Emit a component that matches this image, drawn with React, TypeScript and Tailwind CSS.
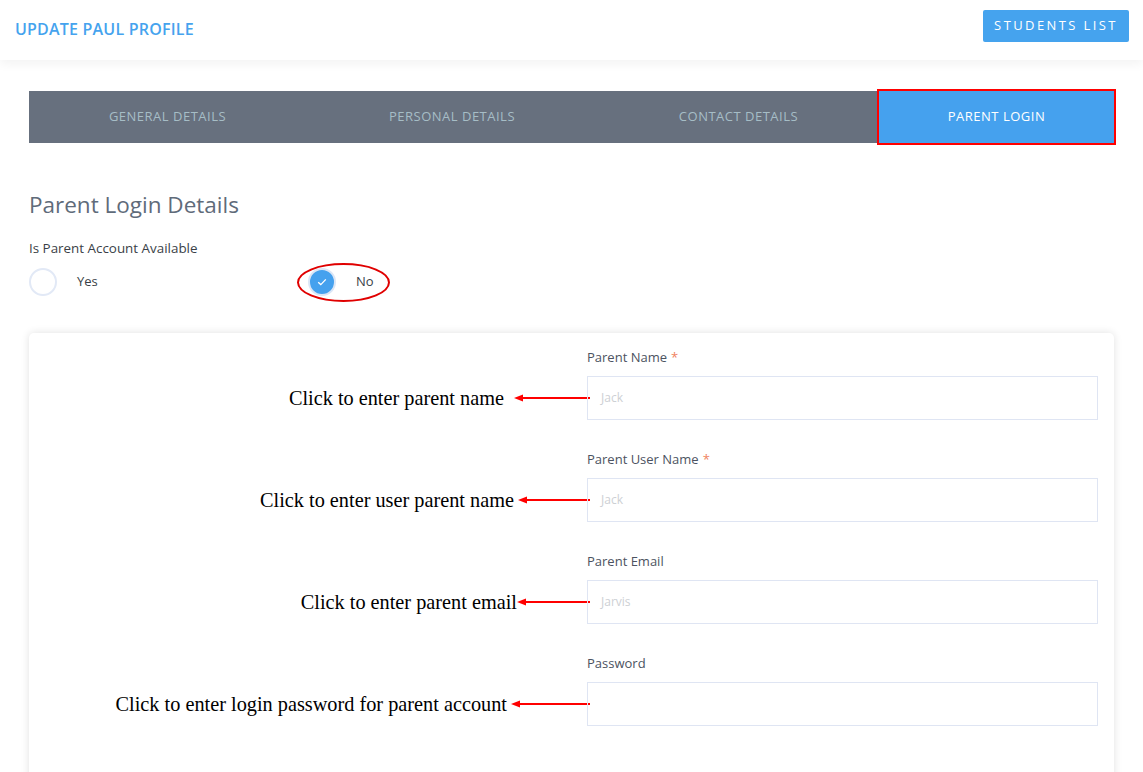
import React from "react";

const font = { fontFamily: '"Open Sans", "Liberation Sans", sans-serif' };
const serif = { fontFamily: '"Liberation Serif", "Times New Roman", serif' };

function Arrow({ w }: { w: number }) {
  return (
    <svg width={w} height="10" viewBox={`0 0 ${w} 10`} className="shrink-0 -mr-[3px]">
      <line x1="8" y1="5" x2={w} y2="5" stroke="#ff0000" strokeWidth="2" />
      <polygon points="0,5 9,1.5 9,8.5" fill="#ff0000" />
    </svg>
  );
}

const fields = [
  { label: "Parent Name", req: true, ph: "Jack", note: "Click to enter parent name", gap: 10, arrow: 76 },
  { label: "Parent User Name", req: true, ph: "Jack", note: "Click to enter user parent name", gap: 4, arrow: 72 },
  { label: "Parent Email", req: false, ph: "Jarvis", note: "Click to enter parent email", gap: 0, arrow: 73 },
  { label: "Password", req: false, ph: "", note: "Click to enter login password for parent account", gap: 4, arrow: 79 },
];

export default function App() {
  return (
    <div className="min-h-[772px] bg-white overflow-hidden" style={font}>
      <header className="h-[60px] flex items-center justify-between pl-[15px] pr-[14px] bg-white shadow-[0_4px_10px_rgba(0,0,0,0.05)] relative z-10">
        <h1 className="text-[16px] font-semibold text-[#45a3ee] tracking-[0.2px] mt-[-2px]">UPDATE PAUL PROFILE</h1>
        <button className="h-[32px] w-[146px] mt-[-8px] rounded-[2px] bg-[#45a3ee] text-white text-[13px] tracking-[2.4px]">
          STUDENTS LIST
        </button>
      </header>

      <div className="px-[29px] pt-[31px]">
        <div className="relative grid grid-cols-[277fr_292fr_281fr_235fr] h-[52px] bg-[#67707e] text-[13px] tracking-[0.5px]">
          <div className="flex items-center justify-center text-[#a6bdc6]">GENERAL DETAILS</div>
          <div className="flex items-center justify-center text-[#a6bdc6]">PERSONAL DETAILS</div>
          <div className="flex items-center justify-center text-[#a6bdc6]">CONTACT DETAILS</div>
          <div className="relative flex items-center justify-center bg-[#45a1ee] text-white">
            PARENT LOGIN
            <div className="absolute -inset-[2px] border-2 border-[#ff0000]" />
          </div>
        </div>

        <h2 className="mt-[47px] text-[22.5px] leading-[30px] text-[#5f6b7a]">Parent Login Details</h2>
        <div className="mt-[19px] text-[13.4px] leading-[18px] text-[#3a3f47]">Is Parent Account Available</div>

        <div className="mt-[11px] flex items-center h-[28px] text-[13px] text-[#3a3f47]">
          <div className="w-[279px] flex items-center">
            <span className="w-[28px] h-[28px] rounded-full border-2 border-[#e2e9f6] bg-white" />
            <span className="ml-[20px]">Yes</span>
          </div>
          <div className="relative flex items-center">
            <span className="w-[28px] h-[28px] rounded-full border-2 border-[#dbe6f6] bg-[#45a1ee] flex items-center justify-center">
              <svg width="10" height="8" viewBox="0 0 10 8">
                <path d="M1.2 4.2 L3.8 6.6 L8.8 1.4" fill="none" stroke="#fff" strokeWidth="1.3" />
              </svg>
            </span>
            <span className="ml-[20px]">No</span>
            <div className="absolute left-[-11px] top-[-5px] w-[93px] h-[39px] rounded-[50%] border-2 border-[#e00000]" />
          </div>
        </div>

        <div className="mt-[37px] bg-white rounded-[5px] shadow-[0_0_8px_rgba(0,0,0,0.12)] pt-[14px] pr-[16px] pb-[40px]">
          {fields.map((f, i) => (
            <div key={i} className="grid grid-cols-[558px_1fr] mb-[29px]">
              <div />
              <div className="text-[13px] leading-[20px] text-[#4c5361] mb-[9px]">
                {f.label}
                {f.req && <span className="text-[#f0825e] ml-[4px]">*</span>}
              </div>
              <div className="flex items-center justify-end">
                <span className="text-[20.3px] leading-[24px] text-black whitespace-nowrap" style={{ ...serif, marginRight: f.gap }}>
                  {f.note}
                </span>
                <Arrow w={f.arrow} />
              </div>
              <div className="h-[44px] border border-[#dfe5f3] flex items-center px-[13px] text-[12px] text-[#cdd0d4]">
                {f.ph}
              </div>
            </div>
          ))}
        </div>
      </div>
    </div>
  );
}
